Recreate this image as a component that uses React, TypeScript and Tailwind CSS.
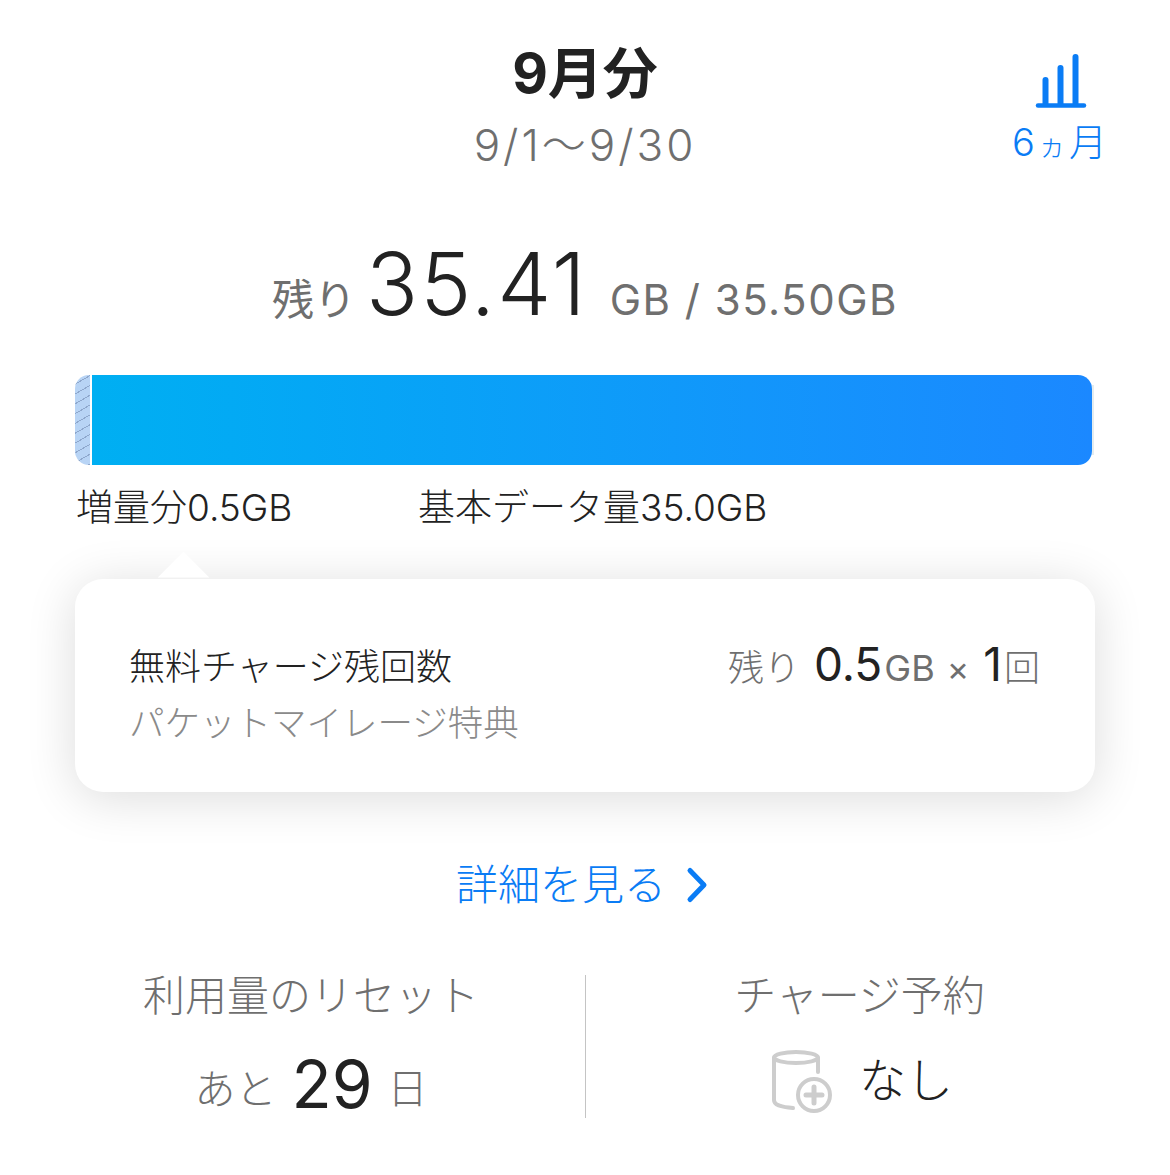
const sans = "font-['Inter','Noto_Sans_CJK_JP',sans-serif]";

function ChartIcon() {
  return (
    <svg width="52" height="54" viewBox="0 0 52 54" className="block">
      <g stroke="#0a7cf5" strokeWidth="6" strokeLinecap="round" fill="none">
        <path d="M10.500 26V50" />
        <path d="M25.500 14V50" />
        <path d="M40.500 3V50" />
      </g>
      <path d="M3 51.500H49" stroke="#0a7cf5" strokeWidth="4.500" strokeLinecap="round" />
    </svg>
  );
}

function ChargeIcon() {
  return (
    <svg width="62" height="64" viewBox="0 0 62 64" fill="none" stroke="#cdcdcd" strokeLinecap="round" className="block">
      <ellipse cx="24" cy="7.500" rx="22" ry="5.500" strokeWidth="4" />
      <path d="M2 8V50C2 55 8 57 21 58" strokeWidth="4" />
      <path d="M46 8V22" strokeWidth="4" />
      <circle cx="42" cy="45" r="16" strokeWidth="4" />
      <path d="M42 37V53M34 45H50" strokeWidth="5" />
    </svg>
  );
}

export default function App() {
  return (
    <div className={`w-[1170px] h-[1175px] bg-white overflow-hidden ${sans}`}>
      <div className="grid grid-cols-[1fr_auto_1fr] pt-[42px]">
        <div />
        <div className="flex flex-col items-center">
          <div className="text-[55px] leading-[62px] font-bold text-[#222222]">9月分</div>
          <div className="mt-[16px] text-[44px] leading-[50px] font-light tracking-[3px] text-[#6f6f6f]">9/1〜9/30</div>
        </div>
        <div className="flex justify-end pr-[60px] pt-[12px]">
          <div className="flex flex-col items-center">
            <ChartIcon />
            <div className="mt-[14px] text-[38px] leading-[40px] text-[#0a7cf5] font-light whitespace-nowrap tracking-[3px]">
              6<span className="text-[28px]">ヵ</span>月
            </div>
          </div>
        </div>
      </div>

      <div className="mt-[79px] flex justify-center items-baseline text-[#6f6f6f] whitespace-nowrap">
        <span className="text-[42px] leading-[70px]">残り</span>
        <span className="ml-[10px] text-[86px] leading-[70px] font-light tracking-[2px] text-[#222222]">35.41</span>
        <span className="ml-[22px] text-[42px] leading-[70px] tracking-[1.500px]">GB / 35.50GB</span>
      </div>

      <div className="mt-[40px] mx-[75px] h-[90px] flex">
        <div className="w-[15px] rounded-l-[14px] bg-[#b8d4f5] bg-[repeating-linear-gradient(150deg,#b8d4f5_0px,#b8d4f5_7.500px,#8ea7cc_7.500px,#8ea7cc_8.500px)]" />
        <div className="ml-[2px] w-[1000px] rounded-r-[14px] bg-gradient-to-r from-[#00aff2] to-[#1b88ff]" />
        <div className="w-[2px] my-[10px] bg-[#e4ecef]" />
      </div>

      <div className="mt-[21px] ml-[76px] flex text-[37px] leading-[44px] font-light text-[#222222] whitespace-nowrap">
        <span className="w-[342px]">増量分0.5GB</span>
        <span>基本データ量35.0GB</span>
      </div>

      <div className="relative mt-[49px] mx-[75px] h-[213px] rounded-[28px] bg-white shadow-[0_6px_50px_rgba(0,0,0,0.14)] flex justify-between pl-[54px] pr-[55px] pt-[64px]">
        <div className="absolute left-[90px] top-[-20px] w-[37px] h-[37px] rotate-45 bg-white [clip-path:polygon(0_0,100%_0,0_100%)]" />
        <div>
          <div className="text-[36px] leading-[48px] font-light text-[#222222] whitespace-nowrap">無料チャージ残回数</div>
          <div className="mt-[9px] text-[35.500px] leading-[48px] font-light text-[#8a8a8a] whitespace-nowrap">パケットマイレージ特典</div>
        </div>
        <div className="-mt-[3px] flex items-baseline h-[48px] whitespace-nowrap text-[#6f6f6f]">
          <span className="text-[36px] leading-[48px] font-light">残り</span>
          <span className="ml-[14px] text-[46px] leading-[48px] text-[#222222]">0.5</span>
          <span className="ml-[2px] text-[36px] leading-[48px]">GB</span>
          <span className="ml-[12px] text-[34px] leading-[48px]">×</span>
          <span className="ml-[14px] text-[46px] leading-[48px] text-[#222222]">1</span>
          <span className="ml-[2px] text-[36px] leading-[48px] font-light">回</span>
        </div>
      </div>

      <div className="mt-[66px] flex justify-center items-center text-[#0a7cf5] pr-[4px]">
        <span className="text-[42px] leading-[54px] font-light">詳細を見る</span>
        <svg width="24" height="38" viewBox="0 0 24 38" fill="none" className="ml-[20px] block">
          <path d="M4 4.500L18 19L4 33.500" stroke="#0a7cf5" strokeWidth="5" strokeLinecap="round" strokeLinejoin="round" />
        </svg>
      </div>

      <div className="mt-[63px] mx-[75px] h-[143px] grid grid-cols-[510px_1px_1fr] grid-rows-[143px]">
        <div className="flex flex-col items-center text-[#6f6f6f] pr-[38px]">
          <div className="text-[42px] leading-[42px] font-light">利用量のリセット</div>
          <div className="mt-[29px] flex items-center whitespace-nowrap">
            <span className="mt-[10px] text-[41px] leading-[66px] font-light">あと</span>
            <span className="ml-[15px] text-[66px] leading-[66px] text-[#222222]">29</span>
            <span className="ml-[15px] mt-[10px] text-[40px] leading-[66px] font-light">日</span>
          </div>
        </div>
        <div className="bg-[#c4c4c4]" />
        <div className="flex flex-col items-center text-[#6f6f6f] pl-[38px]">
          <div className="text-[42px] leading-[42px] font-light">チャージ予約</div>
          <div className="mt-[33px] ml-[6px] flex items-center gap-[25px]">
            <ChargeIcon />
            <span className="mb-[4px] text-[47px] leading-[60px] text-[#222222] font-light">なし</span>
          </div>
        </div>
      </div>
    </div>
  );
}
